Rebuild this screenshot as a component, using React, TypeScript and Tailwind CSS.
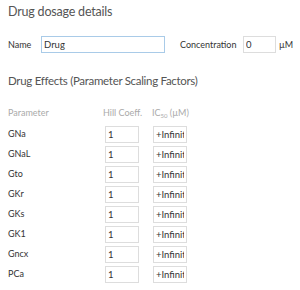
const params = ["GNa", "GNaL", "Gto", "GKr", "GKs", "GK1", "Gncx", "PCa"];

export default function App() {
  return (
    <div className="w-[300px] h-[290px] bg-white pl-2 pt-[3px] font-['Lato','Open_Sans',sans-serif] text-[#333] overflow-hidden">
      <h2 className="text-[12.5px] leading-[18px] tracking-[-0.2px] text-[#555]">Drug dosage details</h2>

      <div className="mt-[15px] flex items-center h-[17px] text-[9px]">
        <span className="w-[33px]">Name</span>
        <input
          defaultValue="Drug"
          className="w-[124px] h-[17px] border border-[#a9cbe8] px-[2px] text-[9.5px] outline-none"
        />
        <span className="ml-[15px] w-[63px]">Concentration</span>
        <input
          defaultValue="0"
          className="w-[33px] h-[17px] border border-[#ddd] px-[2px] text-[9.5px] outline-none"
        />
        <span className="ml-[3px]">µM</span>
      </div>

      <h2 className="mt-[19px] text-[11.5px] leading-[18px] tracking-[-0.3px] text-[#555]">
        Drug Effects (Parameter Scaling Factors)
      </h2>

      <div className="mt-[16px] grid grid-cols-[97px_48px_60px] text-[9px]">
        <div className="text-[#aaa] leading-[14px]">Parameter</div>
        <div className="text-[#aaa] leading-[14px] -ml-[2px]">Hill Coeff.</div>
        <div className="text-[#aaa] leading-[14px] -ml-[1px] whitespace-nowrap">
          IC<sub className="text-[6px]">50</sub> (µM)
        </div>
        {params.map((p, i) => (
          <div key={p} className="contents">
            <div className={`h-[20px] flex items-center ${i === 0 ? "mt-[4px]" : ""}`}>{p}</div>
            <div className={`h-[20px] flex items-center ${i === 0 ? "mt-[4px]" : ""}`}>
              <input
                defaultValue="1"
                className="w-[34px] h-[17px] border border-[#ddd] px-[2px] text-[9.5px] outline-none"
              />
            </div>
            <div className={`h-[20px] flex items-center ${i === 0 ? "mt-[4px]" : ""}`}>
              <input
                defaultValue="+Infinity"
                className="w-[34px] h-[17px] border border-[#ddd] px-[2px] text-[9.5px] outline-none"
              />
            </div>
          </div>
        ))}
      </div>
    </div>
  );
}
